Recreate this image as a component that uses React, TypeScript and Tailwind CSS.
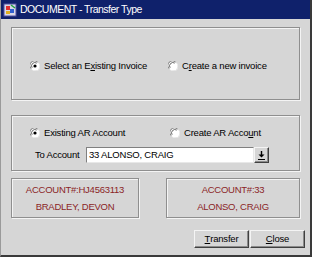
import React from "react";

function Radio({ checked }: { checked?: boolean }) {
  return (
    <svg width="10" height="10" viewBox="0 0 10 10" className="shrink-0">
      <circle cx="5" cy="5" r="4.6" fill="#fff" />
      <path d="M1.1 7.6 A4.6 4.6 0 0 1 7.6 1.1" stroke="#7a7a7a" strokeWidth="1" fill="none" />
      <path d="M2.1 6.8 A3.4 3.4 0 0 1 6.8 2.1" stroke="#404040" strokeWidth="0.8" fill="none" />
      <path d="M8.9 2.4 A4.6 4.6 0 0 1 2.4 8.9" stroke="#ececec" strokeWidth="1" fill="none" />
      {checked && <circle cx="5" cy="5" r="1.6" fill="#000" />}
    </svg>
  );
}

function RadioOption({ checked, children }: { checked?: boolean; children: React.ReactNode }) {
  return (
    <div className="flex items-center gap-[4px] whitespace-nowrap">
      <Radio checked={checked} />
      <span>{children}</span>
    </div>
  );
}

const etched =
  "border border-[#8f8f8f] shadow-[inset_1px_1px_0_#f4f4f4,1px_1px_0_#f4f4f4]";

const raised =
  "border border-t-[#f4f4f4] border-l-[#f4f4f4] border-r-[#404040] border-b-[#404040] shadow-[inset_-1px_-1px_0_#8a8a8a]";

export default function App() {
  return (
    <div
      className="w-[312px] h-[257px] bg-[#d6d6d6] flex flex-col border-l border-l-[#9a9a9a] border-r-2 border-r-[#3a3a3a] border-b-2 border-b-[#3a3a3a] text-[9.5px] tracking-[-0.2px] text-black overflow-hidden whitespace-nowrap"
      style={{ fontFamily: '"Liberation Sans", Arial, sans-serif' }}
    >
      {/* title bar */}
      <div className="h-[19px] bg-[#0f216b] flex items-center pl-[2px] gap-[3px] shrink-0">
        <svg width="14" height="14" viewBox="0 0 14 14">
          <rect x="1" y="1" width="12" height="12" fill="#d8d8e8" stroke="#5050a0" />
          <rect x="3" y="3" width="4" height="4" fill="#e03030" />
          <rect x="7" y="6" width="4" height="4" fill="#3060d0" />
          <rect x="3" y="8" width="4" height="3" fill="#e0b020" />
          <path d="M8 2 L12 5" stroke="#20a040" strokeWidth="1.5" />
        </svg>
        <span className="text-white text-[10.5px] tracking-[-0.5px]">DOCUMENT - Transfer Type</span>
      </div>

      <div className="flex flex-col pl-[10px] pr-[9px]">
        {/* invoice choice */}
        <div className={`mt-[8px] h-[73px] w-[289px] ${etched} flex items-center pt-[5px]`}>
          <div className="w-[156px] pl-[18px]">
            <RadioOption checked>
              Select an E<span className="underline">x</span>isting Invoice
            </RadioOption>
          </div>
          <RadioOption>
            C<span className="underline">r</span>eate a new invoice
          </RadioOption>
        </div>

        {/* AR account */}
        <div className={`mt-[15px] h-[56px] w-[289px] ${etched} flex flex-col pt-[10px]`}>
          <div className="flex items-center">
            <div className="w-[158px] pl-[18px]">
              <RadioOption checked>Existing AR Account</RadioOption>
            </div>
            <RadioOption>Create AR Acco<span className="underline">u</span>nt</RadioOption>
          </div>
          <div className="flex items-center mt-[7px] pl-[23px]">
            <span className="w-[51px]">To Account</span>
            <div className="h-[16px] w-[168px] bg-white border border-t-[#808080] border-l-[#808080] border-r-[#e8e8e8] border-b-[#e8e8e8] flex items-center pl-[2px]">
              33 ALONSO, CRAIG
            </div>
            <div className={`h-[16px] w-[15px] bg-[#d6d6d6] ${raised} flex items-center justify-center`}>
              <svg width="7" height="9" viewBox="0 0 7 9">
                <path d="M3.5 0 V5" stroke="#000" strokeWidth="1.4" />
                <path d="M0.5 3.5 L3.5 6.5 L6.5 3.5 Z" fill="#000" />
                <path d="M0 8.5 H7" stroke="#000" strokeWidth="1" />
              </svg>
            </div>
          </div>
        </div>

        {/* account boxes */}
        <div className="mt-[7px] flex gap-[27px] text-[#8b1f26] tracking-[-0.25px]">
          <div className={`w-[128px] h-[40px] ${etched} flex flex-col items-center justify-center gap-[7px]`}>
            <span className="leading-none">ACCOUNT#:HJ4563113</span>
            <span className="leading-none">BRADLEY, DEVON</span>
          </div>
          <div className={`w-[134px] h-[40px] ${etched} flex flex-col items-center justify-center gap-[7px]`}>
            <span className="leading-none">ACCOUNT#:33</span>
            <span className="leading-none">ALONSO, CRAIG</span>
          </div>
        </div>

        {/* buttons */}
        <div className="mt-[12px] flex justify-end mr-[-4px] gap-[1px]">
          <button className={`w-[55px] h-[18px] bg-[#d6d6d6] ${raised} flex items-center justify-center`}>
            <span className="underline">T</span>ransfer
          </button>
          <button className={`w-[55px] h-[18px] bg-[#d6d6d6] ${raised} flex items-center justify-center`}>
            <span className="underline">C</span>lose
          </button>
        </div>
      </div>
    </div>
  );
}
